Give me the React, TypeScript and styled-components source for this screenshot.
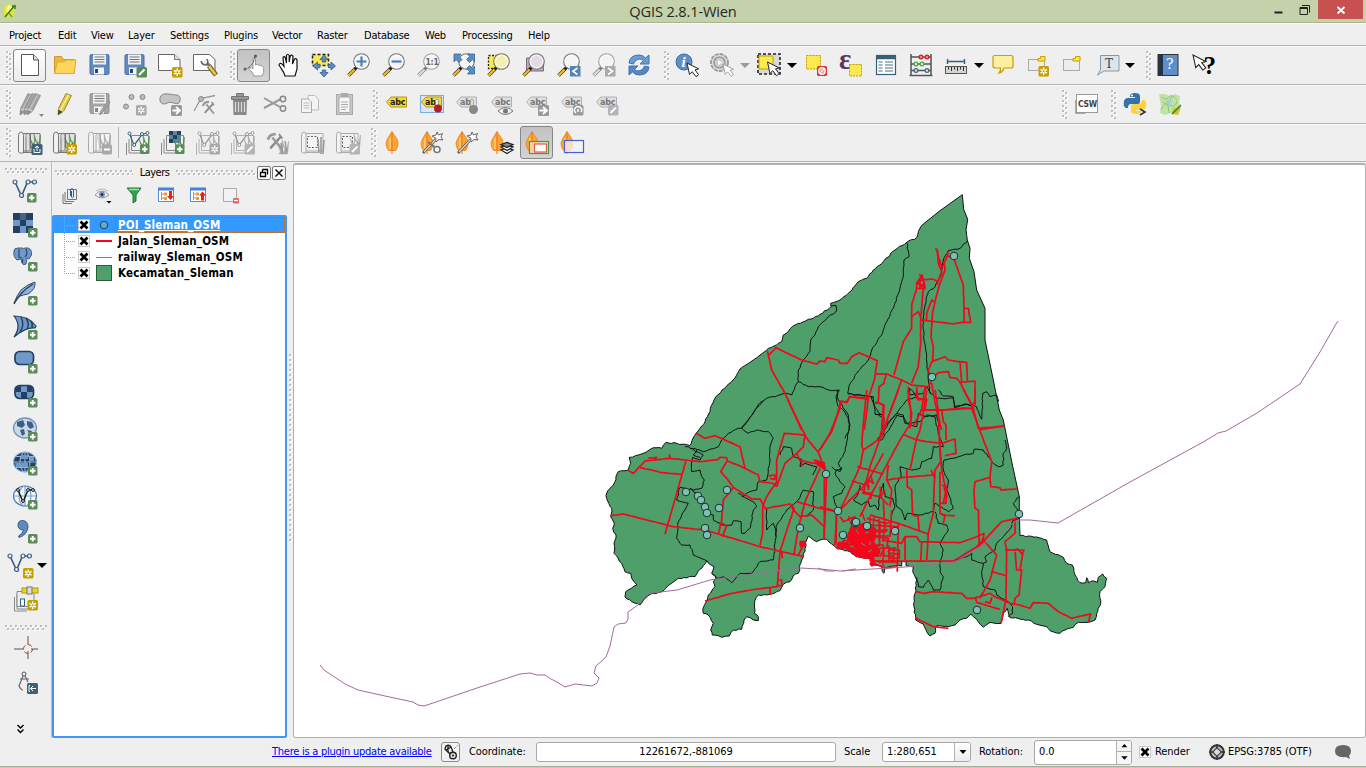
import React from "react";
import styled, { createGlobalStyle, css } from "styled-components";

const Global = createGlobalStyle`
  *, *::before, *::after { box-sizing: border-box; }
  body { margin: 0; background: #efefef; overflow: hidden; }
`;

const UI = `"DejaVu Sans Condensed", "DejaVu Sans", sans-serif`;

const Window = styled.div`
  width: 1366px;
  height: 768px;
  display: flex;
  flex-direction: column;
  background: #efefef;
  color: #000;
  font: 11px/14px ${UI};
  letter-spacing: -0.22px;
  overflow: hidden;
`;

/* ---------- title bar ---------- */
const TitleBar = styled.header`
  display: grid;
  grid-template-columns: 140px 1fr 140px;
  height: 23px;
  flex: none;
  background: #c4d1ab;
  border-bottom: 1px solid #a9b58f;
`;
const TitleIcon = styled.div`
  padding: 3px 0 0 2px;
  height: 22px;
  svg { display: block; }
`;
const Title = styled.h1`
  margin: 0;
  text-align: center;
  font: 400 14.6px/23px "Open Sans", sans-serif;
  letter-spacing: -0.15px;
  color: #26291f;
`;
const WinButtons = styled.div`
  display: flex;
  justify-content: flex-end;
  align-items: flex-start;
  padding-right: 3px;
`;
const WinButton = styled.div<{ $w: number; $close?: boolean }>`
  width: ${(p) => p.$w}px;
  height: 19px;
  display: flex;
  align-items: center;
  justify-content: center;
  background: ${(p) => (p.$close ? "#c75050" : "transparent")};
`;

/* ---------- menu ---------- */
const MenuBar = styled.nav`
  display: flex;
  height: 23px;
  flex: none;
  padding-left: 9px;
  border-top: 1px solid #fafafa;
  border-bottom: 1px solid #b4b4b4;
`;
const MenuItem = styled.span<{ $w: number }>`
  width: ${(p) => p.$w}px;
  line-height: 24px;
  white-space: nowrap;
`;

/* ---------- toolbars ---------- */
const ToolBar = styled.div<{ $h?: number }>`
  display: flex;
  align-items: center;
  height: ${(p) => p.$h ?? 39}px;
  flex: none;
  padding-bottom: 1px;
  border-top: 1px solid #fafafa;
  border-bottom: 1px solid #b4b4b4;
`;
const Tool = styled.div<{ $w?: number; $on?: boolean; $raised?: boolean }>`
  width: ${(p) => (p.$w ?? 35) - 2}px;
  height: 33px;
  margin: 0 1px;
  flex: none;
  display: flex;
  align-items: center;
  justify-content: center;
  border: 1px solid transparent;
  border-radius: 3px;
  svg { flex: none; overflow: visible; }
  ${(p) => p.$on && css`border-color: #868686; background: linear-gradient(#c2c2c2, #d4d4d4);`}
  ${(p) => p.$raised && css`border-color: #868686; background: linear-gradient(#fdfdfd, #ececec);`}
`;
const Grip = styled.div<{ $w: number; $pad?: number }>`
  width: ${(p) => p.$w}px;
  height: 29px;
  flex: none;
  padding-left: ${(p) => p.$pad ?? 6}px;
  &::before {
    content: "";
    display: block;
    width: 6px;
    height: 100%;
    background:
      radial-gradient(circle at 1px 1px, #bdbdbd 0.9px, transparent 1.3px) 0 0 / 12px 5px,
      radial-gradient(circle at 1px 1px, #ffffff 0.9px, transparent 1.3px) 1px 1px / 12px 5px,
      radial-gradient(circle at 1px 1px, #bdbdbd 0.9px, transparent 1.3px) 3px 2px / 12px 5px,
      radial-gradient(circle at 1px 1px, #ffffff 0.9px, transparent 1.3px) 4px 3px / 12px 5px;
  }
`;
const HGrip = styled.div<{ $w: number }>`
  width: ${(p) => p.$w}px;
  height: 6px;
  flex: none;
  background:
    radial-gradient(circle at 1px 1px, #bdbdbd 0.9px, transparent 1.3px) 0 0 / 5px 12px,
    radial-gradient(circle at 1px 1px, #ffffff 0.9px, transparent 1.3px) 1px 1px / 5px 12px,
    radial-gradient(circle at 1px 1px, #bdbdbd 0.9px, transparent 1.3px) 2px 3px / 5px 12px,
    radial-gradient(circle at 1px 1px, #ffffff 0.9px, transparent 1.3px) 3px 4px / 5px 12px;
`;
const Space = styled.div<{ $w: number; $h?: number }>`
  width: ${(p) => p.$w}px;
  height: ${(p) => p.$h ?? 1}px;
  flex: none;
`;
const Separator = styled.div`
  width: 1px;
  height: 31px;
  margin: 0 1px;
  background: #b4b4b4;
`;
const Arrow = styled.span<{ $w: number; $dim?: boolean }>`
  width: ${(p) => p.$w}px;
  flex: none;
  display: flex;
  justify-content: center;
  &::before {
    content: "";
    border: 5px solid transparent;
    border-top-color: ${(p) => (p.$dim ? "#9a9a9a" : "#000")};
    border-bottom: 0;
  }
`;

/* ---------- body ---------- */
const Body = styled.div`
  display: flex;
  height: 576px;
  flex: none;
`;
const SideBar = styled.aside`
  width: 52px;
  flex: none;
  display: flex;
  flex-direction: column;
  align-items: flex-start;
  padding: 6px 0 0 0;
  border-right: 1px solid #bdbdbd;
  ${HGrip} { margin-left: 5px; }
`;
const SideTool = styled.div<{ $left?: number; $h?: number }>`
  width: 51px;
  height: ${(p) => p.$h ?? 34}px;
  padding-left: ${(p) => p.$left ?? 14}px;
  flex: none;
  display: flex;
  align-items: center;
  svg { flex: none; overflow: visible; }
`;
const Dock = styled.section`
  width: 235px;
  flex: none;
  display: flex;
  flex-direction: column;
`;
const DockTitle = styled.div`
  height: 20px;
  flex: none;
  display: flex;
  align-items: center;
  padding: 1px 0 0 3px;
  span { width: 43px; text-align: center; letter-spacing: -0.5px; }
`;
const DockButton = styled.div`
  width: 14px;
  height: 14px;
  margin-left: 1px;
  border: 1px solid #777;
  border-radius: 2px;
  background: #fafafa;
  svg { display: block; }
`;
const DockTools = styled.div`
  height: 33px;
  flex: none;
  display: flex;
  align-items: center;
  padding: 0 0 7px 2px;
`;
const DockTool = styled.div`
  width: 32px;
  flex: none;
  display: flex;
  justify-content: center;
  svg { overflow: visible; }
`;
const Tree = styled.div`
  flex: 1;
  border: 2px solid #3e97f5;
  border-radius: 2px;
  background: #fff;
`;
const LayerRow = styled.div<{ $on?: boolean }>`
  display: grid;
  grid-template-columns: 22px 20px 20px 1fr;
  height: 16px;
  align-items: center;
  background: ${(p) => (p.$on ? "#3399ff" : "transparent")};
`;
const Branch = styled.span<{ $last?: boolean; $on?: boolean }>`
  height: 16px;
  margin-left: 10px;
  background: linear-gradient(90deg, ${(p) => (p.$on ? "#78aee0" : "#a5a5a5")} 50%, transparent 50%) 0 8px / 2px 1px repeat-x;
  &::before {
    content: "";
    display: block;
    width: 1px;
    height: ${(p) => (p.$last ? 8 : 16)}px;
    background: repeating-linear-gradient(${(p) => (p.$on ? "#78aee0" : "#a5a5a5")} 0 1px, transparent 1px 2px);
  }
`;
const Check = styled.span`
  display: block;
  width: 12px;
  height: 12px;
  margin-left: 2px;
  border: 1px solid #c9c9c9;
  background: #fff;
  svg { display: block; }
`;
const Swatch = styled.span`
  height: 16px;
  svg { display: block; }
`;
const LayerName = styled.span<{ $on?: boolean }>`
  height: 16px;
  margin-left: -1px;
  padding-left: 2px;
  font: 700 11.5px/14px ${UI};
  letter-spacing: 0.15px;
  white-space: nowrap;
  border: 1px solid transparent;
  ${(p) => p.$on && css`color: #fff; text-decoration: underline; border: 1px dotted #b8692c;`}
`;
const Splitter = styled.div`
  width: 6px;
  flex: none;
  padding-top: 192px;
  padding-left: 2px;
  &::before {
    content: "";
    display: block;
    width: 3px;
    height: 190px;
    background:
      radial-gradient(circle at 1px 1px, #bdbdbd 0.9px, transparent 1.3px) 0 0 / 6px 5px,
      radial-gradient(circle at 1px 1px, #ffffff 0.9px, transparent 1.3px) 1px 1px / 6px 5px;
  }
`;
const MapFrame = styled.main`
  flex: 1;
  margin-top: 1px;
  border: 1px solid #b0b0b0;
  border-top-width: 2px;
  border-radius: 3px;
  background: #fff;
  overflow: hidden;
  svg { display: block; }
`;

/* ---------- status bar ---------- */
const StatusBar = styled.footer`
  display: flex;
  align-items: center;
  height: 28px;
  flex: none;
  letter-spacing: -0.08px;
  white-space: nowrap;
`;
const Cell = styled.span<{ $w: number }>`
  width: ${(p) => p.$w}px;
  flex: none;
`;
const Link = styled.a<{ $w: number }>`
  width: ${(p) => p.$w}px;
  flex: none;
  margin-left: 272px;
  color: #0000ff;
  letter-spacing: -0.25px;
  text-decoration: underline;
`;
const SmallButton = styled.div`
  width: 19px;
  height: 20px;
  margin-right: 9px;
  border: 1px solid #8b8b8b;
  border-radius: 3px;
  background: #f2f2f2;
  svg { display: block; }
`;
const Field = styled.div<{ $w: number; $h: number; $center?: boolean }>`
  width: ${(p) => p.$w}px;
  height: ${(p) => p.$h}px;
  flex: none;
  display: flex;
  align-items: center;
  justify-content: ${(p) => (p.$center ? "center" : "space-between")};
  padding-left: ${(p) => (p.$center ? 0 : 4)}px;
  border: 1px solid #a8a8a8;
  border-radius: 3px;
  background: #fff;
  overflow: hidden;
`;
const DropButton = styled.div`
  width: 16px;
  height: 100%;
  display: flex;
  align-items: center;
  justify-content: center;
  border-left: 1px solid #b0b0b0;
  background: linear-gradient(#fff, #ececec);
`;
const Spin = styled.div`
  width: 15px;
  height: 100%;
  display: grid;
  grid-template-rows: 1fr 1fr;
  border-left: 1px solid #b0b0b0;
  background: #f6f6f6;
  svg { display: block; width: 14px; height: 11px; }
  > :first-child { border-bottom: 1px solid #b0b0b0; }
`;
const Taskbar = styled.div`
  height: 2px;
  flex: none;
  background: #a9aa98;
  border-bottom: 1px solid #c9cabc;
`;

/* ---------- shared icon parts ---------- */
const Svg = ({ children, s = 24 }: { children: React.ReactNode; s?: number }) => (
  <svg width={s} height={s} viewBox={`0 0 ${s} ${s}`} fill="none">{children}</svg>
);
type P = { x?: number; y?: number; g?: boolean };
const PlusBadge = ({ x = 14, y = 14 }: P) => (
  <g transform={`translate(${x} ${y})`}>
    <rect width="9.500" height="9.500" rx="1.500" fill="#5a8c5a" />
    <path d="M4.750 2v5.500M2 4.750h5.500" stroke="#fff" strokeWidth="2" />
  </g>
);
const StarBadge = ({ x = 14, y = 14, g }: P) => (
  <g transform={`translate(${x} ${y})`}>
    <rect width="10.500" height="10.500" rx="1.500" fill={g ? "#a8a8a8" : "#c4a000"} />
    <path d="M5.200 1.500v7.500M2 3.300l6.500 3.800M8.500 3.300L2 7.100" stroke="#fff" strokeWidth="1.400" />
    <circle cx="5.200" cy="5.200" r="1" fill={g ? "#a8a8a8" : "#c4a000"} />
  </g>
);
const EditBadge = ({ x = 13, y = 13, g }: P) => (
  <g transform={`translate(${x} ${y})`}>
    <rect width="10.500" height="10.500" rx="1.500" fill={g ? "#b4b4b4" : "#5a8c5a"} />
    <path d="M2.500 8L8 2.500" stroke="#fff" strokeWidth="2" />
  </g>
);
const MoveBadge = ({ x = 13, y = 12 }: P) => (
  <g transform={`translate(${x} ${y})`}>
    <rect width="11" height="11" rx="1.500" fill="#999" />
    <path d="M1.500 5.500h6M5 2l4 3.500L5 9" stroke="#fff" strokeWidth="1.800" />
  </g>
);
const Floppy = ({ g }: P) => (
  <>
    <rect x="2" y="1.500" width="19" height="20" rx="1.500" fill={g ? "#a4a4a4" : "#5f8ac0"} stroke={g ? "#8c8c8c" : "#4a6c99"} />
    <rect x="5" y="1.500" width="13" height="10" fill="#f0f0f0" />
    <path d="M6.500 4h10M6.500 6.500h10M6.500 9h10" stroke="#777" />
    <rect x="6" y="14.500" width="10" height="7" fill="#f4f4f4" />
    <rect x="7" y="16" width="3" height="4" fill={g ? "#888" : "#24476b"} />
  </>
);
const Pencil = ({ x = 0, g }: P) => (
  <g transform={`translate(${x} 0)`}>
    <path d="M11 1.500l5.500 2-8 16-5.500 3.500.5-6.500z" fill={g ? "#9a9a9a" : "#e3c93a"} stroke={g ? "#858585" : "#8a7a28"} strokeWidth=".8" />
    <path d="M13.500 3l-8 15" stroke={g ? "#bbb" : "#fff09a"} strokeWidth="1.500" />
    <path d="M3 23l.4-5.500 4 2.300z" fill={g ? "#888" : "#4b4535"} />
    <path d="M3.500 17l5.300 2.300" stroke="#ddd" />
  </g>
);
const Glass = ({ g, fill = "#f4f4f4" }: P & { fill?: string }) => (
  <>
    <path d="M8.500 15.500L1.500 22.500" stroke={g ? "#888" : "#4b4020"} strokeWidth="3.600" />
    <path d="M7.500 16.500L1.500 22.500" stroke={g ? "#ddd" : "#f3bd22"} strokeWidth="2.200" />
    <path d="M10 14l-2 2" stroke={g ? "#777" : "#111"} strokeWidth="3" />
    <circle cx="14.500" cy="8.500" r="7.800" fill={fill} stroke={g ? "#a2a2a2" : "#777"} strokeWidth="1.100" />
    <circle cx="14.500" cy="8.500" r="6.200" stroke="#fff" strokeWidth="1" opacity=".8" />
  </>
);
const Cursor = ({ x = 12, y = 10, g, s = 1 }: P & { s?: number }) => (
  <path transform={`translate(${x} ${y}) scale(${s})`} d="M0 0l2.500 11.500 2.700-2.800 3.800 5 2.600-2-3.600-4.800 3.700-1z" fill="#fff" stroke={g ? "#999" : "#222"} strokeWidth="1" />
);
const Grass = ({ x = 12, y = 2, g }: P) => (
  <g transform={`translate(${x} ${y})`} fill={g ? "#aaa" : "#5d9a4d"} stroke={g ? "#999" : "#3f7d3c"} strokeWidth=".4">
    <path d="M3 14L0 4l3 6zM5 14L4 0l3 9zM8 14L10.500 1l-.5 10zM1 14l8 0-1-6-3-1z" />
  </g>
);
const Scroll = ({ g }: P) => (
  <g stroke={g ? "#aaa" : "#777"}>
    <path d="M3 2.500h19V20H3" fill={g ? "#f3f3f3" : "#e2e2e2"} />
    <path d="M.5 5q0-4 2.500-4t2.500 3.500V22H2.500Q.5 22 .5 20z" fill="#f2f2f2" />
    <path d="M8 4v17M12.500 3v14M5.500 21.500h9" />
    <path d="M8 4q1-3 4-1v16" fill="#dcdcdc" />
  </g>
);
const CutScroll = () => (
  <g stroke="#aaa">
    <path d="M3 2.500h19V20H3" fill="#f3f3f3" />
    <path d="M.5 5q0-4 2.500-4t2 3.500V22H2.500Q.5 22 .5 20z" fill="#f2f2f2" />
    <path d="M4 21.500h14" />
    <rect x="6.500" y="5.500" width="10" height="11" stroke="#666" strokeDasharray="2 1.500" />
  </g>
);
const LayersVee = ({ g, children }: { g?: boolean; children?: React.ReactNode }) => (
  <>
    <path d="M5.500 4.500h17v15h-17zM3 8v14h15M.5 12v12" stroke={g ? "#b2b2b2" : "#888"} fill="none" />
    <path d="M3.500 2.500L8 14.500 16 3.500l5-1.500" stroke={g ? "#999" : "#3e6578"} strokeWidth="1.300" />
    <g fill="#fff" stroke={g ? "#999" : "#3e6578"}>
      <circle cx="3.500" cy="2.500" r="1.500" /><circle cx="8.200" cy="14" r="1.500" /><circle cx="16" cy="3" r="1.500" /><circle cx="21.500" cy="2" r="1.500" />
    </g>
    {children}
  </>
);
const Leaf = ({ x = 0 }: P) => (
  <g transform={`translate(${x} 0)`}>
    <path d="M7 .5C9.500 5 13 8 13 12q0 4-2.300 7.500H3.500Q1 16 1 12 2 8 7 .5z" fill="#fba535" stroke="#f08a24" />
    <path d="M7 1v22" stroke="#e8762c" strokeWidth="1" />
    <path d="M5 7v11" stroke="#ffc56a" strokeWidth="2" />
  </g>
);
const Tag = ({ g, t = "abc" }: { g?: boolean; t?: string }) => (
  <>
    <path d="M1.500 10L6 5h15.500v10H6z" fill={g ? "#e0e0e0" : "#f5d93a"} stroke={g ? "#b0b0b0" : "#b8960c"} />
    <text x="5" y="12.800" fontFamily="DejaVu Sans" fontWeight="700" fontSize="8" fill={g ? "#777" : "#222"}>{t}</text>
  </>
);
const Wand = () => (
  <>
    <path d="M3 22L19 5" stroke="#555" strokeWidth="2.600" />
    <path d="M4 21L18 6" stroke="#ddd" strokeWidth="1.200" />
    <path d="M17 1l1.500 3 4-1.500L21 6l2 3-4-.5L16 11l-.3-4L12 5l4-1z" fill="#fff" stroke="#666" />
  </>
);
const Hammer = ({ x = 0, y = 0 }: P) => (
  <g transform={`translate(${x} ${y})`} stroke="#8a8a8a">
    <path d="M2 14L12 3" strokeWidth="2.200" /><path d="M4 4l9 11" strokeWidth="2.200" stroke="#999" />
    <path d="M0 6q1-5 7-5" strokeWidth="2.600" stroke="#999" /><path d="M10 1l3 4" strokeWidth="1.600" />
  </g>
);
const Vee = ({ c = "#3f5f80" }: { c?: string }) => (
  <>
    <path d="M2 3l6.500 14L14.500 3h7" stroke={c} strokeWidth="1.700" />
    <g fill="#e6edf4" stroke={c} strokeWidth="1.200"><circle cx="2" cy="3" r="2" /><circle cx="8.500" cy="16.500" r="2" /><circle cx="15" cy="3" r="2" /><circle cx="21.500" cy="3" r="2" /></g>
  </>
);
const Flag = ({ star }: { star?: boolean }) => (
  <Svg>
    <rect x="2.500" y="6.500" width="16" height="11" stroke="#666" strokeDasharray="1 1" fill="#ededed" />
    <path d="M14.500 3.500H19V8h-7V5.500h2.500z" fill="#fce94f" stroke="#c4a000" />
    {star && <StarBadge x={12.500} y={13} />}
  </Svg>
);
const Globe = ({ fill = "#eef4fa", line = "#3f6ea5" }: { fill?: string; line?: string }) => (
  <g stroke={line} strokeWidth="1.100">
    <ellipse cx="12" cy="11" rx="11.500" ry="10" fill={fill} />
    <ellipse cx="12" cy="11" rx="5" ry="10" /><path d="M12 1v20M1 11h22M3 5.500h18M3 16.500h18" />
  </g>
);

/* ---------- map data ---------- */
type Pt = [number, number];
const sheets: Record<string, Pt> = { w: [590, 400], n: [760, 180], e: [820, 390] };
const read = (sheet: string, data: string): Pt[] =>
  data.trim().split(/\s+/).map((s) => {
    const [x, y] = s.split(",").map(Number);
    const [ox, oy] = sheets[sheet];
    return [ox + x / 3, oy + y / 3];
  });
const toPath = (pts: Pt[]) => "M" + pts.map((p) => p[0].toFixed(1) + " " + p[1].toFixed(1)).join("L");
/* Adds small bends between vertices so that borders look surveyed rather than straight. */
const rough = (pts: Pt[], amp: number): Pt[] => {
  let seed = 7;
  const rnd = () => ((seed = (seed * 16807) % 2147483647) / 2147483647 - 0.5) * 2;
  const out: Pt[] = [];
  pts.forEach((a, i) => {
    out.push(a);
    const b = pts[i + 1];
    if (!b) return;
    const len = Math.hypot(b[0] - a[0], b[1] - a[1]);
    const n = Math.floor(len / 2.6);
    for (let k = 1; k < n; k++) {
      const d = rnd() * amp;
      out.push([a[0] + ((b[0] - a[0]) * k) / n - ((b[1] - a[1]) / len) * d, a[1] + ((b[1] - a[1]) * k) / n + ((b[0] - a[0]) / len) * d]);
    }
  });
  return out;
};

const outline: Pt[] = [
  ...read("n", "607,44 611,88 623,118 618,150 622,180 630,205 628,235 642,275 650,330 675,385 675,480 700,600 718,690"),
  ...read("e", "550,90 575,215 598,320 598,370 600,437"),
  ...rough([
    ...read("e", "600,437 650,441 680,450 690,485 730,502 740,520 757,525 765,555 780,578 797,578 800,563 805,578 818,572 832,577 835,562 848,552 860,565 855,590 840,605 842,640 830,670 825,690 805,697 775,697 760,712 735,720 720,730 690,722 680,710 650,703 625,690 570,683 562,655 550,670 543,700 525,700 510,697 490,712 475,695 460,680 452,672 440,685 420,690 405,705 385,710 350,707 345,730 330,738 320,725 310,702 287,690 282,650 285,610 290,570 278,545 280,530 258,526 258,515 245,515 245,528 225,528 195,535 192,550 187,545 185,530 155,525 150,505 115,500 90,485 50,475 35,462 20,448 0,450"),
    ...read("w", "680,425 655,408 650,420 640,470 632,490 625,520 610,527 600,545 580,553 570,572 540,583 505,585 495,600 493,640 505,650 505,662 490,660 470,650 462,660 455,688 430,690 418,708 395,712 367,705 362,690 370,670 355,645 340,640 338,628 352,600 355,585 375,560 370,545 378,530 365,520 372,500 358,492 350,483 340,497 315,530 265,535 245,550 215,575 180,583 165,595 150,615 125,605 105,590 107,575 140,555 125,535 122,520 105,515 95,490 72,460 72,430 78,405 68,385 73,370 62,350 65,325 48,287 60,265 70,255 85,215 115,210 122,190 118,172 145,165 170,155 190,143 215,145 228,127 260,130 300,137 318,100 345,65 360,35 372,0 396,-30 429,-60 450,-93 486,-117"),
    ...read("n", "0,525 25,505 65,485 70,465 105,435 145,418 175,408 213,380 212,370 240,360 270,335 295,305 320,295 340,270 370,245 405,210 440,187 470,173 475,155 490,132"),
  ], 0.7),
  ...read("n", "540,92 607,44"),
];

const borders: [string, string][] = [
  ["n", "440,187 447,230 432,240 430,290 420,325 400,385 380,425 365,465 335,510 325,540 290,580 268,615 263,640 290,645 335,650 345,690 345,703 367,705"],
  ["n", "213,378 228,376 230,390 220,402 205,410 175,440 165,465 152,480 150,515 130,540 115,570 115,605 105,620 95,645 75,640 45,650 20,655 0,668 -15,690 -35,720 -55,745"],
  ["n", "115,605 145,620 180,620 215,632 238,630 228,650 235,680 250,690 265,715 268,750 255,775"],
  ["n", "622,182 600,205 565,212 550,240 545,280 525,320 505,335 495,375 490,420 492,480 500,530 505,600 510,640 530,655 580,655 583,685 615,672 650,680 665,718 668,640 680,635 690,650 710,645 716,665"],
  ["n", "445,625 460,635 470,650 440,660 410,700 430,705 435,730 470,740 475,700 500,710 530,705 540,740"],
  ["n", "345,703 372,712 368,745 382,730 410,700 385,730 365,770"],
  ["n", "445,622 452,645 490,640 500,620 512,640"],
  ["e", "85,12 160,20 162,45 180,72 190,75 185,130 172,150 185,150 215,105 230,75 250,80 260,100 300,95 320,75 345,80 355,130 370,170 340,170 335,205 305,215 300,235 275,240 240,230 243,260 225,290 230,350 245,360 255,390 262,370 300,375 340,365 345,340 385,365 400,355 380,300 385,270 370,240 372,210 400,205 430,195 460,190 462,178 490,180 515,215 535,230 550,225 550,190 560,175 555,150"],
  ["e", "50,0 55,30 85,75 90,105 80,155 75,185 55,220 65,238 50,240 45,250 60,275 75,290 65,310 40,320 50,350"],
  ["e", "35,230 45,240 60,245 65,232"],
  ["e", "598,320 590,325 580,340 590,355 597,370"],
  ["e", "597,385 580,390 575,410 550,440 530,460 525,480 495,500 500,515 490,520 485,545 490,590 525,600 530,615 565,635 578,650 578,670 565,680"],
  ["e", "400,513 440,500 455,490 455,510 490,520"],
  ["e", "345,365 355,400 380,405 385,420 360,460 370,480 360,520 360,545 370,560 360,600 340,600 325,570 310,592 295,590 290,562"],
  ["e", "120,285 115,310 100,330 125,345 145,330 150,350 165,345 175,360 178,320 190,280 195,320 218,325 225,350 215,375"],
  ["e", "355,0 370,18 400,20 405,50 440,42 460,50"],
  ["w", "285,140 320,148 340,155 385,140 395,120 415,100 445,85 455,85 475,100 500,90 535,95 550,115 540,140 540,180 530,240 505,245 500,270 480,275 455,290"],
  ["w", "300,145 340,165 330,180 308,172 305,185 305,215 330,210 335,230 343,240 335,265 310,270 270,262 260,300 295,310 285,330 265,365 260,415 275,435 300,435 310,465 345,480 355,485"],
  ["w", "320,150 310,165 330,172"],
  ["w", "300,265 330,290 350,340 370,345 370,360 390,370 395,375 425,375 430,362 453,365 455,400 465,400 480,385 490,330 500,320 495,310 460,290 445,280"],
  ["w", "365,520 380,535 400,530 425,548 450,520 485,520 510,485 550,480 555,430 558,395 550,370 530,390 530,325"],
  ["w", "570,165 580,140 605,145 610,170 635,178 630,200 645,190 680,200 668,225"],
  ["w", "558,410 558,380 590,330 625,300 640,270 670,275 670,330 650,350"],
  ["w", "455,85 475,60 495,30 520,2"],
];

const roads: [string, string][] = [
  ["n", "525,207 532,208 535,250 545,275 530,315"], ["n", "530,212 545,262 555,250"],
  ["n", "565,215 562,228 552,250 555,270 540,310 530,345 518,395 513,470 520,500 518,548"],
  ["n", "562,228 572,230"], ["n", "583,240 610,315 613,425"],
  ["n", "613,385 625,385 632,427 605,427 580,432 550,428 500,422 500,400 515,360 522,365"],
  ["n", "478,283 490,300 495,325 470,325 470,308 485,300 515,297 530,302"], ["n", "480,295 480,322 492,310"],
  ["n", "470,325 455,375 455,445 430,485 402,585"], ["n", "455,410 475,395 485,420"],
  ["n", "490,320 482,420 482,490 475,560 455,610"], ["n", "480,420 500,422"],
  ["n", "345,582 380,582 425,600 455,615 505,620 515,600 505,570 515,545 555,530 565,540 620,548 622,605"],
  ["n", "600,548 605,605"], ["n", "515,595 535,578 565,575 570,592 590,595 600,607 645,603 645,660 635,685 600,685 550,690 480,690"],
  ["n", "600,607 640,685 655,745 733,738"], ["n", "22,512 35,570 75,640 125,750"],
  ["n", "28,525 47,503 125,540 170,552 180,543 195,545 200,533 235,540 240,550 262,550 275,530 298,518 352,542 343,600 325,655 270,650 262,665 240,663 240,685 215,750"],
  ["n", "325,655 313,750"], ["n", "378,583 372,610 357,620 355,668 372,675 370,750"], ["n", "345,670 355,668"],
  ["n", "425,600 400,670 370,750"], ["n", "445,620 445,660 455,700 450,745"], ["n", "470,622 470,655 500,658 495,690"],
  ["n", "495,622 485,690 460,740"], ["n", "515,610 520,640 530,690 545,750"],
  ["e", "62,35 80,38 88,20 145,28"], ["e", "62,35 50,80 30,130 0,180"],
  ["e", "140,0 132,80 125,165 130,180 120,230 75,330 55,370"], ["e", "165,35 190,45 185,120 175,160 150,230 140,270 130,290"],
  ["e", "235,0 205,80 185,140 160,160 130,180"], ["e", "265,0 272,60 272,100 240,150 195,235 150,320 120,380"],
  ["e", "320,0 310,70 300,120 290,145 270,240"], ["e", "290,0 295,30 320,25"],
  ["e", "345,0 355,60 358,140 365,240 378,300 370,340"], ["e", "358,140 362,215 345,240 342,300 340,370 325,430 320,510"],
  ["e", "253,135 285,148 320,155 365,160 405,147 408,190 375,197"],
  ["e", "305,60 365,60 455,55 515,215 510,262 512,290 540,293 542,300 592,297"],
  ["e", "430,0 460,50"], ["e", "465,0 465,45"], ["e", "478,120 553,107"],
  ["e", "510,262 465,275 462,300 465,355 475,360 478,470"], ["e", "365,60 370,95 378,105 378,150"],
  ["e", "112,230 190,252"], ["e", "95,272 150,290"], ["e", "205,225 200,270 250,262 345,255"],
  ["e", "190,190 140,280 60,360"], ["e", "135,290 130,310 180,320 205,345"], ["e", "200,270 215,300 210,350"],
  ["e", "260,240 262,290 275,300 278,375 295,380 297,425"],
  ["e", "150,375 235,400 325,432"], ["e", "187,450 245,460 255,440 290,440 300,455 420,458 470,440 492,430 490,450 470,470"],
  ["e", "160,513 400,513 480,465 545,395 590,385"], ["e", "585,390 585,430 555,455 560,480 558,630 543,700"],
  ["e", "485,445 530,495 510,570 480,625"], ["e", "515,545 557,557"],
  ["e", "555,480 612,480 605,495"], ["e", "585,485 590,540 605,540 597,615 585,625 583,640"], ["e", "590,475 608,492 600,540"],
  ["e", "287,605 315,610 340,605 425,610 440,625 460,625 510,610 525,620 570,640 600,645 630,655 640,638 685,640 715,665 755,685 775,680 812,672 805,697"],
  ["e", "465,622 470,637 540,658"], ["e", "515,622 510,640 495,635"], ["e", "287,685 340,710 385,715"],
  ["e", "20,255 12,450"], ["e", "50,365 48,460"], ["e", "360,245 360,370 375,375 370,400"], ["e", "365,375 405,378"],
  ["e", "365,285 380,290 378,340 360,340"], ["e", "255,440 255,510"], ["e", "235,400 232,545"], ["e", "305,455 302,513"], ["e", "215,360 210,440"],
  ["e", "190,335 195,420"], ["e", "205,480 238,480 238,505 210,505 205,480"], ["e", "205,490 240,492"], ["e", "222,475 220,510"], ["e", "150,255 160,280 145,270 145,300"],
  ["e", "60,380 70,395 105,380 90,400"], ["e", "140,385 200,400 215,395"], ["e", "150,405 230,410 235,430"], ["e", "165,440 205,445 200,475"], ["e", "180,400 178,470"],
  ["e", "165,425 200,425"], ["e", "170,465 190,465 190,480 180,500"], ["e", "0,350 50,365"], ["e", "180,290 182,320 195,300"],
  ["w", "115,212 130,220 165,183 235,175 290,180 330,185 385,178 390,172 410,173"], ["w", "150,203 185,210 215,218 275,223"],
  ["w", "175,175 200,172 195,180"], ["w", "238,163 240,175"], ["w", "288,182 225,403"],
  ["w", "62,347 100,342 250,380 345,390 510,440 642,470"], ["w", "318,100 345,115 375,107 450,140 465,205"],
  ["w", "410,173 412,183 455,200 505,225 510,245 550,250 560,260"], ["w", "410,185 392,215 410,235 430,262 485,297 510,297 525,325 600,312 615,335 630,350 665,345 703,380"],
  ["w", "430,262 400,300 395,360 385,403"], ["w", "395,370 410,378 397,410"],
  ["w", "645,105 583,100 560,180 560,245 530,290 518,320 518,400 510,437"], ["w", "645,105 640,140 620,160 585,190 560,260"],
  ["w", "535,228 555,225 555,238 540,235"], ["w", "593,0 650,115 685,157 705,210"], ["w", "685,155 725,95 740,50"],
  ["w", "600,312 612,325 570,455 562,560 500,567 425,580 345,603"], ["w", "620,160 630,182 675,190 705,190"], ["w", "635,182 635,200"],
  ["w", "670,180 690,185 700,205 680,192"], ["w", "690,205 645,305 625,385 612,463"], ["w", "620,305 690,325 745,335"],
  ["w", "630,425 645,425 625,465"], ["w", "703,230 703,415"], ["w", "740,335 735,435"], ["w", "540,562 540,585"], ["w", "565,540 575,540 575,558 562,556"],
  ["w", "575,455 577,475"],
];

const railway =
  "M320 665L324 670 333 676 345 684 358 690 385 696 413 702 418 705 424 706 433 703 480 687 520 674 530 673 537 675 545 675 551 679 557 682 565 687 575 684 592 686 597 683 599 678 594 673 596 666 606 657 610 646 614 627 618 624 626 623 628 619 628 612 638 605 645 595 652 593 677 590 710 580 745 575 775 571 800 568 820 569 840 571 905 567 955 562 978 548 1018 520 1030 520 1058 523 1130 482 1205 441 1218 433 1226 431 1257 413 1300 384 1320 352 1336 324 1338 321";

const pois: Pt[] = [
  [954, 256], [932, 377], [826, 474], [838, 511], [855, 523], [856, 522], [867, 526], [843, 535], [895, 531], [800, 528], [1019, 514], [977, 610],
  [686, 492], [698, 496], [701, 500], [705, 507], [707, 513], [719, 508], [727, 490], [705, 528], [707, 535],
];

const MapView = () => (
  <svg width="1071" height="573" viewBox="294 165 1071 573" fill="none">
    <path d={toPath(outline) + "Z"} fill="#4e9f6a" stroke="#111" strokeWidth="1" />
    {borders.map(([s, d], i) => <path key={i} d={toPath(rough(read(s, d), 0.6))} stroke="#111" strokeWidth="1" />)}
    <g stroke="#f4061c" strokeWidth="1.700" strokeLinejoin="round">
      {roads.map(([s, d], i) => <path key={i} d={toPath(rough(read(s, d), 0.15))} />)}
      <path d={toPath(read("e", "95,405 115,410 125,400 145,405 165,415 168,440 160,455 180,480 176,498 160,500 165,525 152,528 150,505 110,500 90,482 75,475 52,475 52,460 70,455 90,462 80,440 88,425")) + "Z"} fill="#f4061c" strokeDasharray="3 1" />
      <path d={toPath(read("w", "675,187 700,188 705,208"))} fill="#f4061c" strokeWidth="2.500" />
      <path d={toPath(read("w", "630,428 645,425 645,437 632,440")) + "Z"} fill="#f4061c" />
      <path d="M849 516v5M862 513l3 8M870 516v8M874 517l-2 22M879 519v20M885 522l-2 20M870 530h18M876 536h14M880 548h16M883 553v14M878 562h20M889 545v16M843 540l8 2M872 563l14 5 12-1M884 548v8h9" strokeWidth="1.400" />
      <path d="M922 275l3 12-8-4zM938 260l4 6M931 470l4 8M944 487l3 10M862 489l5 5M862 493h9v6" />
    </g>
    <g stroke="#4e9f6a" strokeWidth="1"><path d="M856 530l3 4M865 533l4-1M861 543l5 3M870 541v4M850 546l4 1M868 552l4-2" /></g>
    <path d={railway} stroke="#a4699a" strokeWidth="1" />
    <path d="M818 568l8 3 9 0M842 571l14-2" stroke="#a4699a" />
    <g fill="#7dc0b4" stroke="#1e2f2c">{pois.map(([x, y], i) => <circle key={i} cx={x} cy={y} r="3.800" />)}</g>
  </svg>
);

const CrossMark = () => (
  <svg width="10" height="10" viewBox="0 0 10 10"><path d="M1.500 1.500l7 7M8.500 1.500l-7 7" stroke="#000" strokeWidth="2.800" /></svg>
);

const menu: [string, number][] = [
  ["Project", 49], ["Edit", 33], ["View", 37], ["Layer", 42], ["Settings", 54], ["Plugins", 48], ["Vector", 45], ["Raster", 47],
  ["Database", 61], ["Web", 37], ["Processing", 66], ["Help", 40],
];

const layers = [
  { name: "POI_Sleman_OSM", mark: <circle cx="8" cy="8" r="3.800" fill="#5fabc6" stroke="#1d4560" /> },
  { name: "Jalan_Sleman_OSM", mark: <path d="M0 8h16" stroke="#f4061c" strokeWidth="2" /> },
  { name: "railway_Sleman_OSM", mark: <path d="M0 8.500h16" stroke="#a4699a" strokeWidth="1" /> },
  { name: "Kecamatan_Sleman", mark: <rect x=".5" y=".5" width="15" height="15" fill="#4e9f6a" stroke="#265c3b" /> },
];

const sideIcons: React.ReactNode[] = [
  <><Vee /><PlusBadge /></>,
  <><rect width="20" height="20" fill="#6f99c9" /><path d="M0 0h7v7H0zM13 0h7v7h-7zM7 7h6v6H7zM0 13h7v7H0zM13 13h7v7h-7z" fill="#24405e" /><path d="M7 0h6v7H7z" fill="#41648c" /><PlusBadge x={15} y={15} /></>,
  <><path d="M1 4q0-3 4-3h4q2 1 3 0h3q4 1 3.500 7l-2.500 4-2-1-1 6q-3 2-4-1l-1-4-4 1Q0 10 1 4z" fill="#6f99c9" stroke="#3f5f80" /><path d="M6 2v8l3 1M13 2q2 5-1 8M9.500 12v4" stroke="#2d4f75" strokeWidth="1.300" /><PlusBadge x={15} y={15} /></>,
  <><path d="M1 22Q4 14 8 9 15 3 22 1q1 7-7 12-5 1-8 2z" fill="#8fb3d9" stroke="#2d4f75" /><path d="M1 23Q7 11 20 3" stroke="#2d3f55" strokeWidth="1.400" /><PlusBadge x={15} y={15} /></>,
  <><path d="M1 1q15 0 22 10l-1 2q-9-1-21 9 8-11 0-21z" fill="#6f99c9" stroke="#24405e" strokeWidth="1.200" /><path d="M8 2q4 8-1 15M13 3q4 6 1 11M18 6q2 3 1 7" stroke="#24405e" strokeWidth="1.400" /><PlusBadge x={15} y={15} /></>,
  <><rect x="2" y="2.500" width="18.500" height="13" rx="4.500" fill="#6f99c9" stroke="#24405e" strokeWidth="1.700" /><PlusBadge x={15} y={15} /></>,
  <><rect x="2" y="2.500" width="18.500" height="13" rx="4.500" fill="#6f99c9" stroke="#24405e" strokeWidth="1.700" /><path d="M2.500 4l5.500-1v6H2.500zM14 3h5l1 6h-6zM8 9h6v6H8z" fill="#24405e" /><PlusBadge x={15} y={15} /></>,
  <><ellipse cx="12" cy="11" rx="11.500" ry="10" fill="#c9d8e8" stroke="#7194bb" strokeWidth="1.300" /><path d="M4 5l6-2 2 5-3 3-5-2zM14 4l5 1 2 5-4 2-3-4zM7 13l4-1 1 5-3 2zM14 13l5 1-2 4z" fill="#3f5f80" /><PlusBadge x={15} y={15} /></>,
  <><Globe fill="#24405e" line="#8fb3d9" /><path d="M8 4h7v4H8zM2 12h5v4H3zM17 6h4v4h-4zM8 12h7v4H8z" fill="#6f99c9" /><PlusBadge x={15} y={15} /></>,
  <><g stroke="#7ba3d0" strokeWidth="1.200"><ellipse cx="12" cy="11" rx="11.500" ry="10" fill="#f4f8fc" stroke="#4a7ab0" /><ellipse cx="12" cy="11" rx="6" ry="10" /><path d="M12 1v20M1 11h22" /></g><path d="M5 5l5 12 5-12h5" stroke="#111" strokeWidth="1.400" /><g fill="#fff" stroke="#111"><circle cx="5" cy="5" r="1.400" /><circle cx="10" cy="16" r="1.400" /><circle cx="15" cy="5" r="1.400" /><circle cx="20" cy="5" r="1.400" /></g><PlusBadge x={15} y={15} /></>,
  <><path d="M5 6q0-4.500 4.500-4.500Q15 2 15 8q-1 8-9 10.500l-.5-1.500q5-3 5-6Q5 11 5 6z" fill="#5f8ac0" stroke="#3f5f80" /><PlusBadge x={15} y={15} /></>,
];

export default function App() {
  return (
    <Window>
      <Global />
      <TitleBar>
        <TitleIcon>
          <Svg s={16}><path d="M2 4l4-3 5 1 2 5-2 6-4 2-5-3z" fill="#dce93a" /><path d="M4 5l3-3 3 2-2 4 1 4-4-2z" fill="#f6f68a" /><path d="M3 14L13 2M10 3h3v3" stroke="#3d7a22" strokeWidth="1.600" /><path d="M7 10l3 4" stroke="#8a9a20" strokeWidth="1.500" /></Svg>
        </TitleIcon>
        <Title>QGIS 2.8.1-Wien</Title>
        <WinButtons>
          <WinButton $w={27}><Svg s={12}><path d="M1.500 8.500h8" stroke="#222" strokeWidth="2" /></Svg></WinButton>
          <WinButton $w={26}><Svg s={12}><path d="M1 3.500h7.500v7H1zM1 4.500h7.500M3 1.500h7.500v7" stroke="#222" /></Svg></WinButton>
          <WinButton $w={45} $close><Svg s={12}><path d="M2.500 3l7 6.500M9.500 3l-7 6.500" stroke="#fff" strokeWidth="1.800" /></Svg></WinButton>
        </WinButtons>
      </TitleBar>

      <MenuBar>{menu.map(([t, w]) => <MenuItem key={t} $w={w}>{t}</MenuItem>)}</MenuBar>

      <ToolBar>
        <Grip $w={12} />
        <Tool $raised><Svg><path d="M3.500 1.500h12l5 5.500v15.500h-17z" fill="#fff" stroke="#555" /><path d="M15.500 1.500v5.500h5" fill="#ddd" stroke="#555" /></Svg></Tool>
        <Tool><Svg><path d="M1.500 20V3.500h7l2 3h11V20z" fill="#e9b93a" stroke="#c99a2a" /><path d="M1.500 20.500L4.500 9h7l2-2h9.500l-2 13.500z" fill="#fcd55a" stroke="#e0ac30" /></Svg></Tool>
        <Tool><Svg><Floppy /></Svg></Tool>
        <Tool><Svg><Floppy /><EditBadge x={13.500} y={14} /></Svg></Tool>
        <Tool><Svg><path d="M.5 1.500h16l5.500 5v11H.5z" fill="#fff" stroke="#666" /><path d="M16.500 1.500v5H22" stroke="#777" fill="#ddd" /><StarBadge x={14} y={14} /></Svg></Tool>
        <Tool><Svg><path d="M.5 1.500h16l5.500 5v11H.5z" fill="#fff" stroke="#666" /><path d="M12 9l5 4" stroke="#777" strokeWidth="3.500" /><path d="M8 8q1 4 5 4 3-2 1-6" stroke="#666" strokeWidth="1.500" fill="#eee" /><path d="M16 13l7 9" stroke="#7a6420" strokeWidth="5" /><path d="M16 13l6.500 8.500" stroke="#e8c958" strokeWidth="2.600" /></Svg></Tool>
        <Grip $w={14} $pad={8} />
        <Tool $on><Svg><path d="M11 12V6q0-1.500 1-1.500T13.500 6v6l2-.5 1.500.8 2 0 2.700 2v5L20 23h-8l-2-4-3.500-3q.5-2 3-1L11 16z" fill="#fff" stroke="#999" /><path d="M2 17q10-4 11-14" stroke="#555" strokeDasharray="3 1" /><circle cx="13.500" cy="3" r="1.500" fill="#555" /><circle cx="3" cy="16" r="1.500" fill="#666" /></Svg></Tool>
        <Tool><Svg><path d="M8 23q-1-4-3.500-7l-2.500-4q.5-2.500 3-1l2 2.500L6 5q.5-2.500 2.300-.5L9.500 10V2.500q1.200-2.500 2.700 0V9l1-6q1.500-2 2.800.5L15.500 11l2-5q2-1 2.500 1v9l-2 7z" fill="#fff" stroke="#111" strokeWidth="1.200" /></Svg></Tool>
        <Tool><Svg><path d="M.5 1.500h16v11H.500z" fill="#fce94f" stroke="#222" strokeWidth="1.500" strokeDasharray="3 2" /><path d="M12 2l4 4.500h-2.300V9h-3.400V6.500H8zM12 24l4-4.500h-2.300V17h-3.400v2.500H8zM1 13l4.500-4v2.300H8v3.400H5.500V17zM23.500 13L19 9v2.300h-2.500v3.400H19V17z" fill="#5b8cc4" stroke="#2d5b8c" strokeWidth=".8" /></Svg></Tool>
        <Tool><Svg><Glass /><path d="M14.500 3.500v10M9.500 8.500h10" stroke="#4b7fb5" strokeWidth="2.200" /></Svg></Tool>
        <Tool><Svg><Glass /><path d="M9.500 8.500h10" stroke="#4b7fb5" strokeWidth="2.200" /></Svg></Tool>
        <Tool><Svg><Glass g /><text x="8.500" y="12" fontFamily="DejaVu Sans Condensed" fontWeight="700" fontSize="8.500" fill="#666">1:1</text></Svg></Tool>
        <Tool><Svg><Glass /><path d="M2 1h7L7 3.500l3 3-3 3-3-3L2 9zM22.500 1h-7l2 2.500-3 3 3 3 3-3 2 2.500zM22.500 21h-7l2-2.500-3-3 3-3 3 3 2-2.500z" fill="#5b8cc4" stroke="#2d5b8c" strokeWidth=".7" /></Svg></Tool>
        <Tool><Svg><path d="M1.500 2.500h15v13h-15z" fill="#fce94f" stroke="#222" strokeDasharray="2 1.500" strokeWidth="1.300" /><Glass fill="#f6efb5" /></Svg></Tool>
        <Tool><Svg><path d="M4.500 5h17v13h-17z" fill="#b9aebb" stroke="#7a6a80" /><Glass fill="#e3dbe4" /></Svg></Tool>
        <Tool><Svg><Glass /><rect x="13" y="13" width="10.500" height="10.500" fill="#5585b5" /><path d="M20.500 15l-4.500 3.300 4.500 3.200" stroke="#fff" strokeWidth="1.600" /></Svg></Tool>
        <Tool><Svg><Glass g /><rect x="13" y="13" width="10.500" height="10.500" fill="#aaa" /><path d="M16 15l4.500 3.300L16 21.500" stroke="#fff" strokeWidth="1.600" /></Svg></Tool>
        <Tool><Svg><path d="M2 10Q3 2 12 2q4 0 6.500 3L22 2v9h-9l3.500-3.500Q13 4.500 8 8l-1.500 3z" fill="#6c9bd2" stroke="#3f73b0" /><path d="M22 14q-1 8-10 8-4 0-6.500-3L2 22v-9h9l-3.500 3.500q3.500 3 8.500-.5l1.500-3z" fill="#5587c4" stroke="#3f73b0" /></Svg></Tool>
        <Grip $w={13} $pad={8} />
        <Tool><Svg><circle cx="9" cy="9" r="8" fill="#5f8fca" stroke="#3f6ea5" /><text x="6.500" y="14" fontFamily="Liberation Serif" fontStyle="italic" fontWeight="700" fontSize="15" fill="#fff">i</text><Cursor x={12} y={10} /></Svg></Tool>
        <Tool><Svg><circle cx="9.500" cy="9.500" r="8.500" fill="#dedede" stroke="#9a9a9a" strokeWidth="1.800" strokeDasharray="4 1" /><circle cx="9.500" cy="9.500" r="5.500" fill="#ccc" stroke="#999" strokeWidth="1.500" /><path d="M8 7l4.500 2.500L8 12z" fill="#fff" /><Cursor x={13} y={11} g s={0.9} /></Svg></Tool>
        <Arrow $w={12} $dim />
        <Tool><Svg><path d="M1 1h22v20H1z" stroke="#222" strokeWidth="1.600" strokeDasharray="3 2" fill="#d8d8d8" /><path d="M2 3h14v13H2z" fill="#fce94f" stroke="#c4a000" /><Cursor x={10.500} y={9} /></Svg></Tool>
        <Arrow $w={12} />
        <Tool><Svg><path d="M2.500 2.500h14v13.500h-14z" fill="#fce94f" stroke="#c4a000" strokeDasharray="2 1" /><rect x="13" y="13" width="10" height="10" rx="1.500" fill="#d33" /><circle cx="18" cy="18" r="3.300" stroke="#fff" strokeWidth="1.200" fill="#eaa" /><path d="M15.500 20.500l5-5" stroke="#fff" /></Svg></Tool>
        <Tool><Svg><text x="0" y="15.500" fontFamily="Liberation Serif" fontWeight="700" fontSize="29" fill="#5c3566">ε</text><path d="M10.500 11.500h12v11.500h-12z" fill="#fce94f" stroke="#c4a000" strokeDasharray="2 1" /></Svg></Tool>
        <Tool><Svg><rect x="2.500" y="2.500" width="19" height="19" fill="#fff" stroke="#356075" strokeWidth="1.200" /><path d="M3 4.500h18" stroke="#356075" strokeWidth="3.500" /><path d="M4.500 9h4M4.500 12h4M4.500 15h4M4.500 18h4M11 9h8M11 12h8M11 15h8M11 18h8" stroke="#4a6c8c" strokeWidth="1.200" /></Svg></Tool>
        <Tool><Svg><path d="M2 1v21M22 1v21M2 4h20M2 11h20M2 17.500h20M.5 22.500h23" stroke="#555" strokeWidth="1.500" /><g strokeWidth="1.200"><g fill="#e88" stroke="#c22"><circle cx="12" cy="4" r="1.900" /><circle cx="18" cy="4" r="1.900" /></g><g fill="#cec" stroke="#4a4"><circle cx="7" cy="11" r="1.900" /><circle cx="13" cy="11" r="1.900" /></g><g fill="#cde" stroke="#467"><circle cx="7" cy="17.500" r="1.900" /><circle cx="18" cy="17.500" r="1.900" /></g></g></Svg></Tool>
        <Tool><Svg><path d="M3.500 8.500h17M3.500 6v5M20.500 6v5" stroke="#356075" strokeWidth="1.400" /><rect x="1.500" y="13.500" width="21" height="7" fill="#d5d5d0" stroke="#555" /><path d="M4.500 14v2.500M7.500 14v4M10.500 14v2.500M13.500 14v4M16.500 14v2.500M19.500 14v4" stroke="#333" /></Svg></Tool>
        <Arrow $w={12} />
        <Tool><Svg><path d="M4 2.500h16q2 0 2 2V13q0 2-2 2h-7q-1 4-5 5 2-2 1.500-5H4q-2 0-2-2V4.500q0-2 2-2z" fill="#faf0a0" stroke="#c4a000" strokeWidth="1.200" /></Svg></Tool>
        <Tool><Flag star /></Tool>
        <Tool><Flag /></Tool>
        <Tool><Svg><path d="M4.500 2.500h18.500V18H8L1.500 22l3-5z" fill="#dbe5ee" stroke="#8a969f" /><text x="9" y="15" fontFamily="DejaVu Serif" fontSize="12" fill="#444">T</text></Svg></Tool>
        <Arrow $w={10} />
        <Grip $w={15} $pad={11} />
        <Tool><Svg><rect x="2" y="1.500" width="20" height="21" fill="#5f8fca" stroke="#333" /><rect x="2" y="1.500" width="5" height="21" fill="#243444" /><text x="10" y="16" fontFamily="DejaVu Serif" fontSize="14" fill="#fff">?</text></Svg></Tool>
        <Tool><Svg><Cursor x={2} y={2} s={1.100} /><text x="12.500" y="21" fontFamily="Liberation Serif" fontWeight="700" fontSize="25" fill="#000">?</text></Svg></Tool>
      </ToolBar>

      <ToolBar>
        <Grip $w={12} />
        <Tool><Svg><g opacity=".9"><Pencil x={-1} g /><Pencil x={3} g /><Pencil x={6} g /></g><path d="M21 22h5l-2.500 3z" fill="#888" /></Svg></Tool>
        <Tool><Svg><Pencil x={2} /></Svg></Tool>
        <Tool><Svg><Floppy g /><path d="M22 10l-8 11-2 2 .5-3.500 8-11z" fill="#aaa" stroke="#888" /></Svg></Tool>
        <Tool><Svg><g fill="#bbb" stroke="#8a8a8a"><circle cx="8.500" cy="5" r="2.500" /><circle cx="19.500" cy="5" r="2.500" /><circle cx="3" cy="14.500" r="2.500" /></g><StarBadge x={13} y={13} g /></Svg></Tool>
        <Tool><Svg><path d="M2 6q1-5 8-4t9 1q4 1 3 6-1 4-6 2-5-2-9 1-6 0-5-6z" fill="#c4c4c4" stroke="#888" /><MoveBadge x={13} y={13} /></Svg></Tool>
        <Tool><Svg><path d="M1 19L8 6.500l14-3" stroke="#999" strokeWidth="1.300" /><circle cx="8" cy="7" r="2.500" fill="#bbb" stroke="#888" /><g transform="translate(10 9) scale(.85)"><Hammer /></g></Svg></Tool>
        <Tool><Svg><path d="M3.500 4.500h17v3h-17zM8.500 4V1.500h7V4" fill="#999" stroke="#777" /><path d="M5 8h14l-.5 15h-13z" fill="#888" /><path d="M7.500 10v10M10.500 10v10M13.500 10v10M16.500 10v10" stroke="#ddd" strokeWidth="1.200" /></Svg></Tool>
        <Tool><Svg><path d="M1 6l16 9M1 16l17-9" stroke="#999" strokeWidth="2" /><circle cx="20" cy="7" r="2.700" stroke="#888" strokeWidth="1.500" /><circle cx="20" cy="16.500" r="2.700" stroke="#888" strokeWidth="1.500" /></Svg></Tool>
        <Tool><Svg><path d="M10 3.500h7l3.500 4V18H10z" fill="#f4f4f4" stroke="#bbb" /><path d="M3.500 7h7l3 3v10.500h-10z" fill="#f4f4f4" stroke="#aaa" /><path d="M5.500 11h6M5.500 13.500h6M5.500 16h6" stroke="#bbb" /></Svg></Tool>
        <Tool><Svg><rect x="3.500" y="2.500" width="16" height="20" fill="#c8c8c8" stroke="#aaa" /><path d="M6 5h11v15.500H6z" fill="#f6f6f6" stroke="#aaa" /><path d="M8 1h7v4H8z" fill="#aaa" /><path d="M8 10h7M8 12.500h7M8 15h7M8 17.500h5" stroke="#aaa" /></Svg></Tool>
        <Grip $w={17} $pad={11} />
        <Tool><Svg><Tag /></Svg></Tool>
        <Tool><Svg><rect x=".5" y="3.500" width="23" height="17" fill="#d8e6f8" stroke="#7aaae8" /><Tag t="ab" /><path d="M15.500 8v7h3V8q-1.500-1.500-3 0z" fill="#eee" stroke="#888" strokeWidth=".8" /><circle cx="18" cy="16.500" r="4" fill="#b3201f" /></Svg></Tool>
        <Tool><Svg><Tag g t="ab" /><path d="M15.500 8v7h3V8q-1.500-1.500-3 0z" fill="#ddd" stroke="#999" strokeWidth=".8" /><circle cx="18.500" cy="17.500" r="4.500" fill="#888" /></Svg></Tool>
        <Tool><Svg><Tag g /><path d="M8 19q7-7 15 0-8 7-15 0z" fill="#f2f2f2" stroke="#777" /><circle cx="15.500" cy="19" r="2.500" fill="#777" /></Svg></Tool>
        <Tool><Svg><Tag g /><MoveBadge x={13} y={13} /></Svg></Tool>
        <Tool><Svg><Tag g /><rect x="13" y="13" width="10.500" height="10.500" rx="1.500" fill="#999" /><path d="M21 20a3.500 3.500 0 1 0-5 1M18 17v3" stroke="#fff" strokeWidth="1.500" /></Svg></Tool>
        <Tool><Svg><Tag g /><EditBadge g x={13} y={13} /></Svg></Tool>
        <Space $w={438} />
        <Grip $w={6} $pad={0} />
        <Tool><Svg><path d="M1.500 8v13.500h10" stroke="#aaa" fill="none" /><rect x="2.500" y="2.500" width="21" height="18" fill="#fff" stroke="#999" /><text x="4" y="14.500" fontFamily="DejaVu Sans Condensed" fontWeight="700" fontSize="8.500" fill="#444">CSW</text></Svg></Tool>
        <Grip $w={14} $pad={8} />
        <Tool><Svg><path d="M12 1q5 0 5 3v6q0 2-3 2H8q-3 0-3 4H3q-3-1-2-7 1-3 4-3h7V5H7V4q0-3 5-3z" fill="#3672a5" /><path d="M13 22q-5 0-5-3v-5q0-2 3-2h5q3 0 3-4h2q3 1 2 7-1 3-4 3h-6v1h5v1q0 2-5 2z" fill="#fdd23e" /><circle cx="9" cy="3.500" r="1" fill="#fff" /><path d="M17 17l5 3-5 3" stroke="#333" strokeWidth="1.600" /></Svg></Tool>
        <Tool><Svg><path d="M1 2l6 0 5 2 5-2 5 2-1 7 1 6-2 6-7-2-6 2-5-2 1-7-1-6z" fill="#bfe3a5" /><path d="M3 5q6 4 8 0t8 3M3 18q4-9 9-5t7-4M5 10l5 3 1 8M14 3l-2 6" stroke="#8cc878" /><path d="M8 9q5-3 7 2l-3-1-1 4z" fill="#a9c8ee" /><path d="M14 22l1-6 8-1-3 8z" fill="#c9c42e" /><path d="M14 22l9-9" stroke="#3d7a22" strokeWidth="1.500" /></Svg></Tool>
      </ToolBar>

      <ToolBar $h={38}>
        <Grip $w={12} />
        <Tool><Svg><Scroll /><Grass x={12} y={3} /><rect x="13.500" y="13" width="11" height="11" rx="1.500" fill="#3e6078" /><path d="M16 18v3.500h6V18M19 20v-5M17 17l2-2 2 2" stroke="#fff" /></Svg></Tool>
        <Tool><Svg><Scroll /><Grass x={12} y={3} /><StarBadge x={13.500} y={13} /></Svg></Tool>
        <Tool><Svg><Scroll g /><Grass g x={12} y={3} /><rect x="14" y="13.500" width="10" height="10" rx="1.500" fill="#aaa" /><path d="M16 18.500h6" stroke="#fff" strokeWidth="2" /></Svg></Tool>
        <Separator />
        <Tool><Svg><LayersVee><Grass x={13} y={4} /><PlusBadge x={14} y={13.500} /></LayersVee></Svg></Tool>
        <Tool><Svg><path d="M5.500 4.500h17v15h-17zM3 8v14h15M.5 12v12" stroke="#888" /><rect x="8" y="0" width="12" height="12" fill="#5f86a0" /><path d="M8 0h4v4H8zM16 0h4v4h-4zM12 4h4v4h-4zM8 8h4v4H8z" fill="#24405e" /><Grass x={13} y={5} /><PlusBadge x={14} y={13.500} /></Svg></Tool>
        <Tool><Svg><LayersVee g><Grass g x={13} y={4} /><StarBadge g x={13.500} y={13} /></LayersVee></Svg></Tool>
        <Tool><Svg><LayersVee g><Grass g x={13} y={4} /><EditBadge g x={13.500} y={13} /></LayersVee></Svg></Tool>
        <Tool><Svg><Grass g x={12} y={9} /><g transform="translate(2 2) scale(1.100)"><Hammer /></g><path d="M15 12l2 11M19 10l2 13" stroke="#999" strokeWidth="1.500" /></Svg></Tool>
        <Tool><Svg><CutScroll /><path d="M17 8l1 14M20 6v17M23 9l-1 14" stroke="#999" strokeWidth="1.600" /></Svg></Tool>
        <Tool><Svg><CutScroll /><Grass g x={14} y={3} /><EditBadge g x={13.500} y={13} /></Svg></Tool>
        <Grip $w={11} $pad={6} />
        <Tool><Svg><Leaf x={3} /></Svg></Tool>
        <Space $w={3} />
        <Tool><Svg><Leaf /><Wand /><path d="M8 11l8 6" stroke="#777" strokeWidth="2" /><circle cx="17" cy="18.500" r="3" fill="#fff" stroke="#777" strokeWidth="1.500" /></Svg></Tool>
        <Tool><Svg><Leaf /><Wand /></Svg></Tool>
        <Tool><Svg><Leaf /><g fill="#fff" stroke="#222" strokeWidth="1.200"><path d="M11 19l6-2 6 2-6 3.500z" /><path d="M11 16l6-2 6 2-6 3.500z" /><path d="M11 13.500l6-2 6 2-6 3z" fill="#888" /></g></Svg></Tool>
        <Tool $on><Svg><Leaf /><rect x="4.500" y="10.500" width="19" height="12" fill="#fbe6c9" fillOpacity=".75" stroke="#3f9a4e" strokeWidth="1.200" /><rect x="9.500" y="13" width="12" height="8" fill="#fff" stroke="#e25b4a" strokeWidth="1.200" /></Svg></Tool>
        <Tool><Svg><Leaf /><rect x="4.500" y="9.500" width="19" height="12" fill="#f6f3f6" fillOpacity=".75" stroke="#4a5fd0" strokeWidth="1.200" /></Svg></Tool>
      </ToolBar>

      <Body>
        <SideBar>
          <HGrip $w={42} />
          {sideIcons.map((icon, i) => <SideTool key={i} $left={13}><Svg>{icon}</Svg></SideTool>)}
          <SideTool $left={8}><Svg><Vee /><StarBadge x={15} y={15} /></Svg><Arrow $w={20} /></SideTool>
          <SideTool><Svg><path d="M3 8v14h14M.5 10v14H13" stroke="#888" /><path d="M3 4.500h17v15H3z" fill="#eee" stroke="#888" /><rect x="6.500" y="12" width="4" height="7" fill="#fff" stroke="#356075" /><rect x="8" y="1" width="16" height="5" fill="#e4d91f" stroke="#a89f14" /><rect x="13" y="0" width="5" height="7" fill="#ddd" stroke="#777" /><StarBadge x={13.500} y={13} /></Svg></SideTool>
          <Space $w={52} $h={9} />
          <HGrip $w={42} />
          <SideTool><Svg><path d="M14 0v9M14 15v8M0 13h10M17 13h7" stroke="#555" /><circle cx="14" cy="13" r="4.500" stroke="#b33" strokeDasharray="4 3" /></Svg></SideTool>
          <SideTool><Svg><circle cx="10" cy="4" r="2" stroke="#555" /><path d="M9 6L5 16q2 4 4 4M11 6l3 6M6 9h9" stroke="#666" strokeWidth="1.200" /><rect x="13" y="13" width="11" height="11" rx="1.500" fill="#3e6078" /><path d="M16 15.500h-1v6h1M22 18.500h-5M19 16l-2.500 2.500L19 21" stroke="#fff" /></Svg></SideTool>
          <Space $w={52} $h={22} />
          <SideTool $h={16}><Svg s={12}><path d="M3.500 2l3 3 3-3M3.500 6.500l3 3 3-3" stroke="#000" strokeWidth="1.400" /></Svg></SideTool>
        </SideBar>

        <Dock>
          <DockTitle>
            <HGrip $w={78} />
            <span>Layers</span>
            <HGrip $w={80} />
            <DockButton><Svg s={12}><path d="M4.500 2.500h5v5M4.500 2.500V5M2.500 5.500h5v4h-5z" stroke="#000" strokeWidth="1.300" /></Svg></DockButton>
            <DockButton><Svg s={12}><path d="M2.500 2.500l7 7M9.500 2.500l-7 7" stroke="#000" strokeWidth="1.400" /></Svg></DockButton>
          </DockTitle>
          <DockTools>
            <DockTool><Svg s={16}><path d="M5.500 2.500h9v10h-9zM3 5v9.500h9M1 7v9.500h9" stroke="#777" /><path d="M8.500 9V2.500q1.500-2 3 0V10q-1 1.500-2 0V4" stroke="#345a8a" /></Svg></DockTool>
            <DockTool><Svg s={16}><path d="M1 8q7-8 14 0-7 6-14 0z" fill="#f4f4f4" stroke="#999" /><path d="M2 4q6-4 12 0" stroke="#bbb" /><circle cx="8" cy="7.500" r="3" fill="#7a97bd" /><circle cx="8" cy="7.500" r="1.300" fill="#223" /><path d="M12.500 14h5L15 16.500z" fill="#000" /></Svg></DockTool>
            <DockTool><Svg s={16}><path d="M1 1h14l-5 7v6l-3 2V8z" fill="#35a04c" stroke="#1d7a35" /><path d="M3 2.500h10" stroke="#a6deb0" strokeWidth="1.500" /></Svg></DockTool>
            <DockTool><Svg s={16}><path d="M.5 1.500h15v13H.5z" fill="#fff" stroke="#5a8ad8" /><path d="M0 2h16" stroke="#4a80dc" strokeWidth="3" /><path d="M3.500 5v8M4 7h3M4 11h3" stroke="#999" /><path d="M6 5.500h3v3H6zM6 10h3v3H6z" fill="#f39a2a" /><path d="M11 4h3v5h2l-3.500 4L9 9h2z" fill="#e8201a" /></Svg></DockTool>
            <DockTool><Svg s={16}><path d="M.5 1.500h15v13H.5z" fill="#fff" stroke="#5a8ad8" /><path d="M0 2h16" stroke="#4a80dc" strokeWidth="3" /><path d="M3.500 5v8M4 7h3M4 11h3" stroke="#999" /><path d="M6 5.500h3v3H6zM6 10h3v3H6z" fill="#f39a2a" /><path d="M11 13.500h3v-5h2l-3.500-4L9 8.500h2z" fill="#e8201a" /></Svg></DockTool>
            <DockTool><Svg s={16}><path d="M1.500 1.500h13v13h-13z" fill="#f2f2f2" stroke="#aaa" /><rect x="11" y="11" width="6" height="5.500" rx="1" fill="#e06666" /><path d="M12 13.500h4" stroke="#fff" strokeWidth="1.300" /></Svg></DockTool>
          </DockTools>
          <Tree>
            {layers.map((l, i) => (
              <LayerRow key={l.name} $on={i === 0}>
                <Branch $on={i === 0} $last={i === 3} />
                <Check><CrossMark /></Check>
                <Swatch><Svg s={16}>{l.mark}</Svg></Swatch>
                <LayerName $on={i === 0}>{l.name}</LayerName>
              </LayerRow>
            ))}
          </Tree>
        </Dock>
        <Splitter />
        <MapFrame><MapView /></MapFrame>
      </Body>

      <StatusBar>
        <Link $w={169}>There is a plugin update available</Link>
        <SmallButton><Svg s={18}><path d="M4 3q3-2 5 1l2 5q-3 3-5 0L3 6z" fill="#eee" stroke="#222" strokeWidth="1.400" /><path d="M6 3v6M9 4L4 7" stroke="#222" strokeWidth="1.300" /><circle cx="11" cy="12.500" r="3.300" fill="#ddd" stroke="#222" strokeWidth="1.400" /><circle cx="11" cy="12.500" r="1" fill="#222" /><path d="M12 6l4-4" stroke="#555" strokeDasharray="1 1" /></Svg></SmallButton>
        <Cell $w={67}>Coordinate:</Cell>
        <Field $w={300} $h={20} $center>12261672,-881069</Field>
        <Space $w={8} />
        <Cell $w={38}>Scale</Cell>
        <Field $w={89} $h={20}>1:280,651<DropButton><Svg s={10}><path d="M1.500 3h7L5 7z" fill="#000" /></Svg></DropButton></Field>
        <Space $w={8} />
        <Cell $w={55}>Rotation:</Cell>
        <Field $w={98} $h={25}>0.0<Spin><Svg s={12}><path d="M3 7.500h7l-3.500-4z" fill="#000" /></Svg><Svg s={12}><path d="M3 4.500h7l-3.500 4z" fill="#000" /></Svg></Spin></Field>
        <Space $w={5} />
        <Check><CrossMark /></Check>
        <Space $w={4} />
        <Cell $w={54}>Render</Cell>
        <Svg s={16}><circle cx="8" cy="8" r="6.800" fill="#bbb" stroke="#333" strokeWidth="2" /><path d="M8 0v16M0 8h16" stroke="#333" strokeWidth="1.400" /><rect x="5" y="5" width="6" height="6" fill="#ddd" stroke="#333" transform="rotate(45 8 8)" /></Svg>
        <Space $w={3} />
        <Cell $w={106}>EPSG:3785 (OTF)</Cell>
        <Svg s={18}><path d="M9 2q8 0 8 6 0 3-2 4.500l1 3.500-4-2q-11 1-11-6 0-6 8-6z" fill="#666" /></Svg>
      </StatusBar>
      <Taskbar />
    </Window>
  );
}
